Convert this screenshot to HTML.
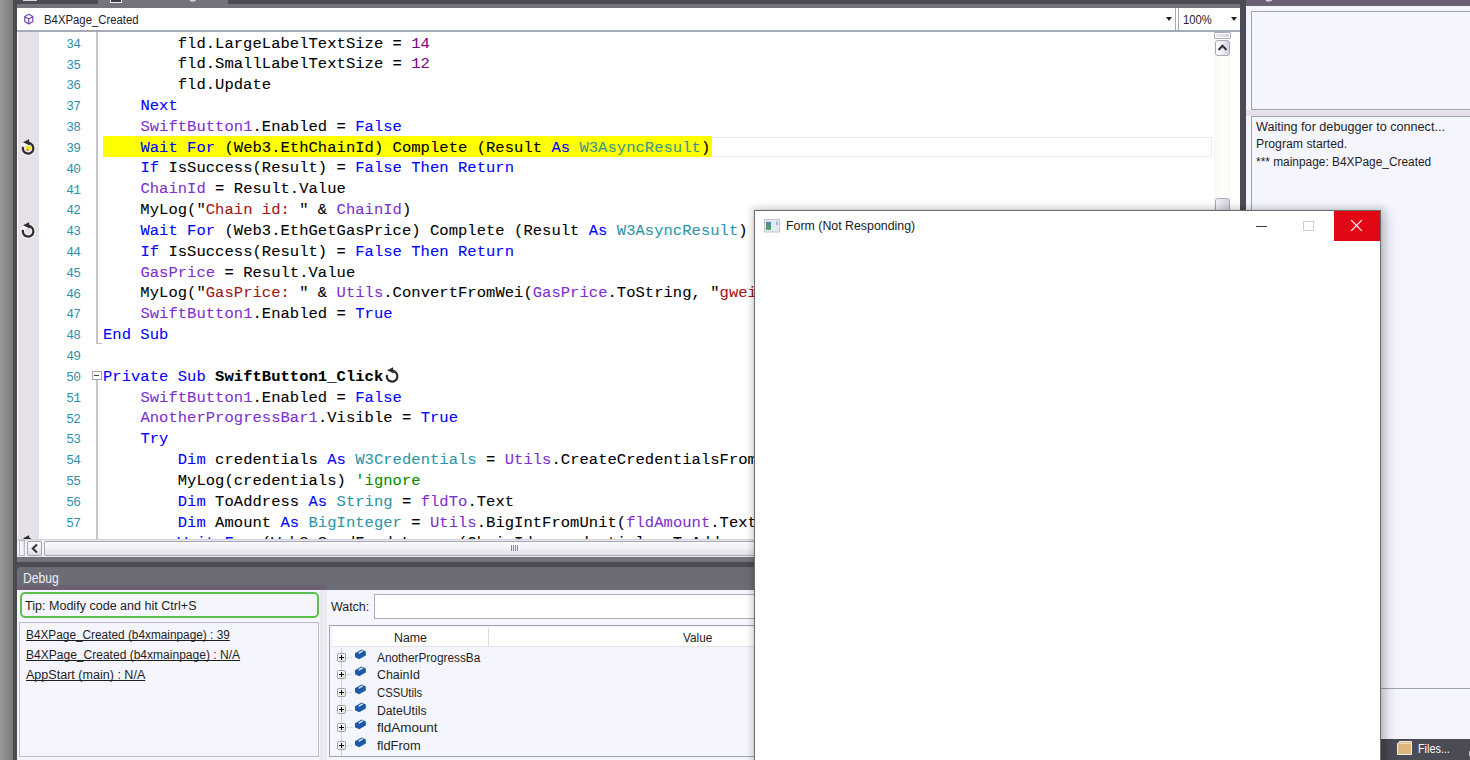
<!DOCTYPE html>
<html>
<head>
<meta charset="utf-8">
<title>B4X IDE</title>
<style>
*{box-sizing:border-box;margin:0;padding:0}
html,body{width:1470px;height:760px;overflow:hidden}
body{background:#4b4b55;font-family:"Liberation Sans",sans-serif;font-size:12px;color:#1a1a1a;position:relative}
.abs,body>div{position:absolute}
/* left outside gradient */
#lgrad{left:0;top:0;width:12.5px;height:760px;background:linear-gradient(to right,#999,#7a7a7a)}
/* top strip */
#tstrip{left:17px;top:4px;width:1223px;height:4.5px;background:#73737d}
#tabact{left:98px;top:0;width:130px;height:5px;background:#73737d}
/* editor */
#edbg{left:17px;top:8px;width:1223px;height:549px;background:#fff}
#gutter{left:17.5px;top:32px;width:21.5px;height:507px;background:#e6e0e9}
#oline{left:96px;top:32px;width:2px;height:311px;background:#c6c6c6}
#otick{left:96px;top:342.5px;width:5.5px;height:1.5px;background:#c0c0c0}
#oline2{left:96px;top:380px;width:2px;height:160px;background:#c6c6c6}
.cl{position:absolute;left:103px;white-space:pre;font-family:"Liberation Mono",monospace;font-size:15.5px;line-height:20.83px;height:20.83px;letter-spacing:0.04px;color:#000;-webkit-text-stroke:0.08px}
.ln{position:absolute;left:39.4px;width:41px;text-align:right;font-family:"Liberation Mono",monospace;font-size:12.8px;line-height:20.83px;height:20.83px;color:#2b91af;letter-spacing:-0.6px}
.k{color:#0000ff}.g{color:#7d30d0}.n{color:#800080}.t{color:#2d95a8}.s{color:#a31515}.c{color:#008c00}
.cl b{font-weight:bold}
#ddbar{left:17px;top:8.5px;width:1223px;height:21.5px;background:#fff}
#ddline{left:17px;top:30px;width:1223px;height:2px;background:#a4abb6}

/* dropdown bar */
#ddtxt{left:43px;top:10px;height:18px;line-height:18px;font-size:12.5px;color:#1e1e1e;white-space:nowrap}
.arrow{width:0;height:0;border-left:3.5px solid transparent;border-right:3.5px solid transparent;border-top:4px solid #222}
#ddsepL{left:1175px;top:8px;width:1px;height:22px;background:#a4abb6}
#ddsepR{left:1178px;top:8px;width:1px;height:22px;background:#a4abb6}
#zoomtxt{left:1182px;top:10px;height:18px;line-height:18px;font-size:12.5px;color:#1e1e1e;white-space:nowrap}
/* v scrollbar */
#vsb{left:1214px;top:32px;width:17px;height:507px;background:linear-gradient(to right,#f8f8f1,#fefefc 50%,#f9f8f5)}
#vsplit{left:1213.5px;top:32px;width:17.5px;height:7px;background:#fff;border:1px solid #adadbf;border-radius:1px}
#vsplit i{position:absolute;left:1.5px;top:1px;width:12.5px;height:3px;background:linear-gradient(to right,#ececf4,#cfcfe2)}
#vup{left:1214.8px;top:39.5px;width:15px;height:16px;border:1px solid #a9a9bc;border-radius:3px;background:linear-gradient(to right,#fdfdff 15%,#d2d2e4)}
#vthumb{left:1214.8px;top:197.5px;width:15px;height:400px;border:1px solid #ababba;border-radius:3px;background:linear-gradient(to right,#f4f4fa,#d4d4e2)}
/* h scrollbar */
#hsb{left:17px;top:539px;width:1223px;height:18px;background:linear-gradient(to bottom,#c8c8d0 0,#f0f0f6 2px,#f6f6fb 60%,#e8e8f0)}
#hsplit{left:19px;top:540px;width:6px;height:16px;border:1px solid #b8b8c4;background:linear-gradient(to right,#fff,#e0e0ea)}
#hleft{left:26.5px;top:540.5px;width:15px;height:15px;border:1px solid #a0a0b0;border-radius:2px;background:linear-gradient(to bottom,#fdfdff,#dcdce8)}
#hthumb{left:43.5px;top:540.5px;width:942px;height:15px;border:1px solid #a8a8b8;border-radius:2px;background:linear-gradient(to bottom,#fbfbfe 0,#f2f2f8 45%,#dedeea 100%)}
#hgrip{left:510.5px;top:545px;width:8px;height:6px;background:repeating-linear-gradient(to right,#8c8c98 0,#8c8c98 1px,transparent 1px,transparent 2px)}
/* bands under editor */
#band1{left:17px;top:557px;width:1223px;height:5px;background:#73737d}
/* debug */
#dbghead{left:17px;top:567px;width:1223px;height:23px;background:#6c6c76;border-top-left-radius:4px}
#dbgband{left:17px;top:585px;width:309px;height:5px;background:#6a6273}
#dbgtitle{left:23px;top:569px;height:17px;line-height:17px;font-size:12.5px;color:#ededf3;white-space:nowrap}
#dbgbody{left:17px;top:589.5px;width:1223px;height:171px;background:#f5f5fd}

/* debug contents */
#tipbox{left:19.5px;top:591.5px;width:299px;height:26px;border:2.9px solid #5cc148;border-radius:5px;background:#f5f5fd}
#tiptxt{left:25px;top:596px;height:17px;line-height:17px;font-size:12.5px;white-space:nowrap;color:#1e1e1e}
#stackbox{left:19px;top:622px;width:300px;height:135px;border:1px solid #b9bdca;background:#f5f5fd}
.stk{position:absolute;left:25px;height:17px;line-height:17px;font-size:12.5px;white-space:nowrap;color:#1e1e1e;text-decoration:underline}
#dsplit{left:319.5px;top:589.5px;width:7.5px;height:171px;background:#ebe8f0}
#watchlbl{left:331px;top:598px;height:17px;line-height:17px;font-size:12.5px;white-space:nowrap;color:#1e1e1e}
#watchin{left:373.5px;top:594px;width:700px;height:25px;border:1px solid #abadb3;background:#fff}
#tbl{left:328.8px;top:625px;width:760px;height:132px;border:1px solid #9ea4b0;background:#f5f5fd}
#thead{left:333px;top:627px;width:750px;height:20px;background:#fff;border-bottom:1px solid #e4e4ec}
#tcolsep{left:487.5px;top:627px;width:1px;height:20px;background:#dcdce4}
.th{position:absolute;top:629px;height:17px;line-height:17px;font-size:12.5px;white-space:nowrap;color:#1e1e1e}
.tr{position:absolute;left:377px;height:17px;line-height:17px;font-size:12.5px;white-space:nowrap;color:#1e1e1e}
.pm{position:absolute;left:337px;width:9px;height:9px;border:1px solid #8fa3bf;border-radius:1.5px;background:linear-gradient(135deg,#fff,#e6e0d0)}
.pm:before{content:"";position:absolute;left:1px;top:3px;width:5px;height:1px;background:#000}
.pm:after{content:"";position:absolute;left:3px;top:1px;width:1px;height:5px;background:#000}
#tvline{left:341px;top:648px;width:1px;height:108px;background:#d0d0d8}
.hcon{position:absolute;left:346px;width:6px;height:1px;background:#dcdce2}

/* right panel */
#rp{left:1246px;top:0;width:224px;height:760px;background:#f5f5fd}
#rphead{left:1246px;top:0;width:224px;height:5.5px;background:#6a6273}
#rpbox1{left:1251px;top:11px;width:230px;height:99px;border:1px solid #9ea4b0;background:#f5f5fd}
#rpsplit{left:1246px;top:110px;width:224px;height:5.5px;background:#e6e0e9}
#rpbox2{left:1251px;top:115.5px;width:230px;height:573.5px;border:1px solid #9ea4b0;background:#f5f5fd}
.log{position:absolute;left:1256.5px;height:17px;line-height:17px;font-size:12.5px;white-space:nowrap;color:#1e1e1e}
#rptabs{left:1246px;top:739px;width:224px;height:21px;background:#4b4b55}
#filestxt{left:1418px;top:740px;height:18px;line-height:18px;font-size:12.5px;color:#fff;white-space:nowrap}
/* form window */
#form{left:754px;top:210px;width:627px;height:560px;background:#fff;border:1px solid #6c6c6c;box-shadow:0 0 5px 4px rgba(0,0,0,.085),5px 3px 12px 1px rgba(0,0,0,.17),0 0 2px rgba(0,0,0,.1)}
#ftitle{left:786px;top:217px;height:18px;line-height:18px;font-size:13px;white-space:nowrap;color:#1a1a1a}
#fclose{left:1333.5px;top:211px;width:46.5px;height:29.5px;background:#e30615}
#fmin{left:1256px;top:225.5px;width:10.5px;height:1.2px;background:#3c3c3c}
#fmax{left:1303px;top:220.5px;width:10.5px;height:10.5px;border:1px solid #cfcfcf}

#cbox{left:92px;top:370.5px;width:9.5px;height:9.5px;border:1px solid #a8a8a8;background:#fff}
#cbox:before{content:"";position:absolute;left:1.2px;top:3.2px;width:5.2px;height:1.2px;background:#444}
.tx{text-decoration-skip-ink:none;position:absolute;white-space:nowrap;height:16px;line-height:16px;transform-origin:0 50%}
</style>
</head>
<body>
<div id="lgrad"></div>
<div id="tstrip"></div>
<div id="tabact"></div>


<div style="left:23px;top:0;width:14px;height:1.2px;background:#d6d6de"></div>
<div style="left:110px;top:0;width:12px;height:3px;border:1px solid #f0f0f4;border-top:none;background:#3a3a42"></div>
<svg class="abs" style="left:189px;top:0" width="8" height="3" viewBox="0 0 8 3"><path d="M1 0.2 Q3.5 1.8 6.2 0.3 L6.5 -1" fill="none" stroke="#e4e4ea" stroke-width="1.3"/></svg>
<!-- editor -->
<div id="edbg"></div>
<div id="gutter"></div>
<div id="hl" style="left:103px;top:136px;width:609px;height:20.8px;background:#ffff00"></div>
<div id="curbox" style="left:712px;top:137px;width:499.5px;height:19.5px;border:1px solid #ebebeb;border-left:none"></div>
<div id="oline"></div><div id="otick"></div><div id="oline2"></div>
<div class="ln" style="top:34.70px">34</div>
<div class="ln" style="top:55.53px">35</div>
<div class="ln" style="top:76.36px">36</div>
<div class="ln" style="top:97.19px">37</div>
<div class="ln" style="top:118.02px">38</div>
<div class="ln" style="top:138.85px">39</div>
<div class="ln" style="top:159.68px">40</div>
<div class="ln" style="top:180.51px">41</div>
<div class="ln" style="top:201.34px">42</div>
<div class="ln" style="top:222.17px">43</div>
<div class="ln" style="top:243.00px">44</div>
<div class="ln" style="top:263.83px">45</div>
<div class="ln" style="top:284.66px">46</div>
<div class="ln" style="top:305.49px">47</div>
<div class="ln" style="top:326.32px">48</div>
<div class="ln" style="top:347.15px">49</div>
<div class="ln" style="top:367.98px">50</div>
<div class="ln" style="top:388.81px">51</div>
<div class="ln" style="top:409.64px">52</div>
<div class="ln" style="top:430.47px">53</div>
<div class="ln" style="top:451.30px">54</div>
<div class="ln" style="top:472.13px">55</div>
<div class="ln" style="top:492.96px">56</div>
<div class="ln" style="top:513.79px">57</div>
<div class="ln" style="top:534.62px">58</div>
<div class="cl" style="top:33.50px">        fld.LargeLabelTextSize = <span class="n">14</span></div>
<div class="cl" style="top:54.33px">        fld.SmallLabelTextSize = <span class="n">12</span></div>
<div class="cl" style="top:75.16px">        fld.Update</div>
<div class="cl" style="top:95.99px">    <span class="k">Next</span></div>
<div class="cl" style="top:116.82px">    <span class="g">SwiftButton1</span>.Enabled = <span class="k">False</span></div>
<div class="cl" style="top:137.65px">    <span class="k">Wait For</span> (Web3.EthChainId) Complete (Result <span class="k">As</span> <span style="color:#3a9a86">W3AsyncResult</span>)</div>
<div class="cl" style="top:158.48px">    <span class="k">If</span> IsSuccess(Result) = <span class="k">False Then Return</span></div>
<div class="cl" style="top:179.31px">    <span class="g">ChainId</span> = Result.Value</div>
<div class="cl" style="top:200.14px">    MyLog("<span class="s">Chain id: </span>" &amp; <span class="g">ChainId</span>)</div>
<div class="cl" style="top:220.97px">    <span class="k">Wait For</span> (Web3.EthGetGasPrice) Complete (Result <span class="k">As</span> <span class="t">W3AsyncResult</span>)</div>
<div class="cl" style="top:241.80px">    <span class="k">If</span> IsSuccess(Result) = <span class="k">False Then Return</span></div>
<div class="cl" style="top:262.63px">    <span class="g">GasPrice</span> = Result.Value</div>
<div class="cl" style="top:283.46px">    MyLog("<span class="s">GasPrice: </span>" &amp; <span class="g">Utils</span>.ConvertFromWei(<span class="g">GasPrice</span>.ToString, "<span class="s">gwei</span>") &amp; " gwei")</div>
<div class="cl" style="top:304.29px">    <span class="g">SwiftButton1</span>.Enabled = <span class="k">True</span></div>
<div class="cl" style="top:325.12px"><span class="k">End Sub</span></div>
<div class="cl" style="top:345.95px"></div>
<div class="cl" style="top:366.78px"><span class="k">Private Sub</span> <b>SwiftButton1_Click</b></div>
<div class="cl" style="top:387.61px">    <span class="g">SwiftButton1</span>.Enabled = <span class="k">False</span></div>
<div class="cl" style="top:408.44px">    <span class="g">AnotherProgressBar1</span>.Visible = <span class="k">True</span></div>
<div class="cl" style="top:429.27px">    <span class="k">Try</span></div>
<div class="cl" style="top:450.10px">        <span class="k">Dim</span> credentials <span class="k">As</span> <span class="t">W3Credentials</span> = <span class="g">Utils</span>.CreateCredentialsFromPrivateKey(PrivateKey)</div>
<div class="cl" style="top:470.93px">        MyLog(credentials) <span class="c">'ignore</span></div>
<div class="cl" style="top:491.76px">        <span class="k">Dim</span> ToAddress <span class="k">As</span> <span class="t">String</span> = <span class="g">fldTo</span>.Text</div>
<div class="cl" style="top:512.59px">        <span class="k">Dim</span> Amount <span class="k">As</span> <span class="t">BigInteger</span> = <span class="g">Utils</span>.BigIntFromUnit(<span class="g">fldAmount</span>.Text, "ether")</div>
<div class="cl" style="top:533.42px">        <span class="k">Wait For</span> (Web3.SendFundsLegacy(ChainId, credentials, ToAddress, Amount)) Complete</div>
<svg class="abs" style="left:19.3px;top:138.7px" width="18" height="18" viewBox="-9 -9 18 18"><circle cx="0" cy="0.3" r="5.4" fill="none" stroke="#f6f3f8" stroke-width="4.4"/><path d="M-3.3 -1.6 L3.3 -1.6 L2.4 1.6 L0.6 2.2 L-1.6 1.8 Z" fill="#f5e400"/><rect x="-1.3" y="1.3" width="1.8" height="1.5" fill="#e8484a"/><path d="M0.2 -5.0 A5.3 5.3 0 1 1 -5.0 -1.2" fill="none" stroke="#2e2e2e" stroke-width="2.3"/><path d="M-5.0 -5.7 L1.0 -8.8 L1.8 -2.6 Z" fill="#2e2e2e"/></svg><svg class="abs" style="left:19.3px;top:222.0px" width="18" height="18" viewBox="-9 -9 18 18"><circle cx="0" cy="0.3" r="5.4" fill="none" stroke="#f6f3f8" stroke-width="4.4"/><path d="M0.2 -5.0 A5.3 5.3 0 1 1 -5.0 -1.2" fill="none" stroke="#2e2e2e" stroke-width="2.3"/><path d="M-5.0 -5.7 L1.0 -8.8 L1.8 -2.6 Z" fill="#2e2e2e"/></svg><svg class="abs" style="left:19.3px;top:535.0px" width="18" height="18" viewBox="-9 -9 18 18"><circle cx="0" cy="0.3" r="5.4" fill="none" stroke="#f6f3f8" stroke-width="4.4"/><path d="M0.2 -5.0 A5.3 5.3 0 1 1 -5.0 -1.2" fill="none" stroke="#2e2e2e" stroke-width="2.3"/><path d="M-5.0 -5.7 L1.0 -8.8 L1.8 -2.6 Z" fill="#2e2e2e"/></svg><svg class="abs" style="left:383.3px;top:366.6px" width="18" height="18" viewBox="-9 -9 18 18"><path d="M0.2 -5.0 A5.3 5.3 0 1 1 -5.0 -1.2" fill="none" stroke="#2e2e2e" stroke-width="2.3"/><path d="M-5.0 -5.7 L1.0 -8.8 L1.8 -2.6 Z" fill="#2e2e2e"/></svg><div id="cbox"></div>
<div id="ddbar"></div>
<div id="ddline"></div>

<svg class="abs" style="left:22.9px;top:13.4px" width="11.6" height="12.6" viewBox="0 0 12 13"><path d="M6 1.3 L10.2 3.7 L10.2 8.9 L6 11.4 L1.8 8.9 L1.8 3.7 Z M2 3.9 L6 6.3 L10 3.9 M6 6.3 L6 11.2" fill="none" stroke="#7248ad" stroke-width="1.2" stroke-linejoin="round"/></svg>
<div class="arrow" style="left:1165.5px;top:17px"></div>
<div id="ddsepL"></div><div id="ddsepR"></div>
<div class="arrow" style="left:1230.5px;top:17px"></div>
<!-- scrollbars -->
<div id="vsb"></div>
<div id="vsplit"><i></i></div>
<div id="vup"></div>
<svg class="abs" style="left:1217px;top:43px" width="11" height="9" viewBox="0 0 11 9"><path d="M1.5 7 L5.5 2.8 L9.5 7" fill="none" stroke="#333" stroke-width="2"/></svg>
<div id="vthumb"></div>
<div id="hsb"></div>
<div id="hsplit"></div>
<div id="hleft"></div>
<svg class="abs" style="left:29.5px;top:543px" width="9" height="11" viewBox="0 0 9 11"><path d="M7 1.5 L2.8 5.5 L7 9.5" fill="none" stroke="#333" stroke-width="2"/></svg>
<div id="hthumb"></div>
<div id="hgrip"></div>
<div id="band1"></div>
<div id="dbghead"></div><div id="dbgband"></div>
<div id="dbgbody"></div>

<div id="dsplit"></div>
<div id="tipbox"></div>
<div id="stackbox"></div>
<div id="watchin"></div>
<div id="tbl"></div>
<div id="thead"></div><div id="tcolsep"></div>
<div id="tvline"></div>
<div class="hcon" style="top:656.7px"></div><div class="pm" style="top:652.5px"></div><svg class="abs" style="left:353.5px;top:648.7px" width="13" height="11" viewBox="0 0 13 11"><path d="M1 4.2 L7.6 0.6 L11.8 2.6 L11.8 6.6 L5.2 10.3 L1 8.2 Z" fill="#1d59a8"/><path d="M5.2 3.9 L8.3 2.2" stroke="#dfe8f6" stroke-width="1.5" stroke-linecap="round"/></svg><div class="hcon" style="top:674.3px"></div><div class="pm" style="top:670.1px"></div><svg class="abs" style="left:353.5px;top:666.3px" width="13" height="11" viewBox="0 0 13 11"><path d="M1 4.2 L7.6 0.6 L11.8 2.6 L11.8 6.6 L5.2 10.3 L1 8.2 Z" fill="#1d59a8"/><path d="M5.2 3.9 L8.3 2.2" stroke="#dfe8f6" stroke-width="1.5" stroke-linecap="round"/></svg><div class="hcon" style="top:692.0px"></div><div class="pm" style="top:687.8px"></div><svg class="abs" style="left:353.5px;top:684.0px" width="13" height="11" viewBox="0 0 13 11"><path d="M1 4.2 L7.6 0.6 L11.8 2.6 L11.8 6.6 L5.2 10.3 L1 8.2 Z" fill="#1d59a8"/><path d="M5.2 3.9 L8.3 2.2" stroke="#dfe8f6" stroke-width="1.5" stroke-linecap="round"/></svg><div class="hcon" style="top:709.6px"></div><div class="pm" style="top:705.4px"></div><svg class="abs" style="left:353.5px;top:701.6px" width="13" height="11" viewBox="0 0 13 11"><path d="M1 4.2 L7.6 0.6 L11.8 2.6 L11.8 6.6 L5.2 10.3 L1 8.2 Z" fill="#1d59a8"/><path d="M5.2 3.9 L8.3 2.2" stroke="#dfe8f6" stroke-width="1.5" stroke-linecap="round"/></svg><div class="hcon" style="top:727.2px"></div><div class="pm" style="top:723.0px"></div><svg class="abs" style="left:353.5px;top:719.2px" width="13" height="11" viewBox="0 0 13 11"><path d="M1 4.2 L7.6 0.6 L11.8 2.6 L11.8 6.6 L5.2 10.3 L1 8.2 Z" fill="#1d59a8"/><path d="M5.2 3.9 L8.3 2.2" stroke="#dfe8f6" stroke-width="1.5" stroke-linecap="round"/></svg><div class="hcon" style="top:744.9px"></div><div class="pm" style="top:740.6px"></div><svg class="abs" style="left:353.5px;top:736.9px" width="13" height="11" viewBox="0 0 13 11"><path d="M1 4.2 L7.6 0.6 L11.8 2.6 L11.8 6.6 L5.2 10.3 L1 8.2 Z" fill="#1d59a8"/><path d="M5.2 3.9 L8.3 2.2" stroke="#dfe8f6" stroke-width="1.5" stroke-linecap="round"/></svg>

<div id="rp"></div><div id="rphead"></div>
<svg class="abs" style="left:1265px;top:0" width="8" height="3" viewBox="0 0 8 3"><path d="M1 0.2 Q3.5 1.8 6.2 0.3 L6.5 -1" fill="none" stroke="#e4e0ea" stroke-width="1.3"/></svg>
<div id="rpbox1"></div><div id="rpsplit"></div><div id="rpbox2"></div>
<div id="rptabs"></div>
<svg class="abs" style="left:1396px;top:740px" width="17" height="16" viewBox="0 0 17 16"><path d="M1.5 14.5 L1.5 3.5 L4 1.5 L15.5 1.5 L15.5 14.5 Z" fill="#dcb67a" stroke="#f3efe6" stroke-width="1"/><path d="M4 1.8 L4 3.6 L15.3 3.6" fill="none" stroke="#f3efe6" stroke-width="0.8"/></svg>
<div class="tx" style="left:43.5px;top:11.5px;font-size:13.7px;color:#1e1e1e;transform:scaleX(0.829);">B4XPage_Created</div>
<div class="tx" style="left:1182.6px;top:11.5px;font-size:13.7px;color:#1e1e1e;transform:scaleX(0.822);">100%</div>
<div class="tx" style="left:22.7px;top:570.3px;font-size:14.4px;color:#ececf2;transform:scaleX(0.844);">Debug</div>
<div class="tx" style="left:24.7px;top:597.5px;font-size:13.7px;color:#1e1e1e;transform:scaleX(0.917);">Tip: Modify code and hit Ctrl+S</div>
<div class="tx" style="left:25.7px;top:626.8px;font-size:13.7px;color:#1e1e1e;transform:scaleX(0.864);text-decoration:underline">B4XPage_Created (b4xmainpage) : 39</div>
<div class="tx" style="left:25.7px;top:646.7px;font-size:13.7px;color:#1e1e1e;transform:scaleX(0.879);text-decoration:underline">B4XPage_Created (b4xmainpage) : N/A</div>
<div class="tx" style="left:25.7px;top:666.6px;font-size:13.7px;color:#1e1e1e;transform:scaleX(0.917);text-decoration:underline">AppStart (main) : N/A</div>
<div class="tx" style="left:330.8px;top:598.6px;font-size:13.7px;color:#1e1e1e;transform:scaleX(0.907);">Watch:</div>
<div class="tx" style="left:393.5px;top:629.8px;font-size:13.7px;color:#1e1e1e;transform:scaleX(0.904);">Name</div>
<div class="tx" style="left:682.5px;top:629.8px;font-size:13.7px;color:#1e1e1e;transform:scaleX(0.862);">Value</div>
<div class="tx" style="left:377.0px;top:649.7px;font-size:13.7px;color:#1e1e1e;transform:scaleX(0.865);">AnotherProgressBa</div>
<div class="tx" style="left:377.0px;top:667.3px;font-size:13.7px;color:#1e1e1e;transform:scaleX(0.907);">ChainId</div>
<div class="tx" style="left:377.0px;top:685.0px;font-size:13.7px;color:#1e1e1e;transform:scaleX(0.825);">CSSUtils</div>
<div class="tx" style="left:377.0px;top:702.6px;font-size:13.7px;color:#1e1e1e;transform:scaleX(0.891);">DateUtils</div>
<div class="tx" style="left:377.0px;top:720.2px;font-size:13.7px;color:#1e1e1e;transform:scaleX(0.983);">fldAmount</div>
<div class="tx" style="left:377.0px;top:737.9px;font-size:13.7px;color:#1e1e1e;transform:scaleX(0.940);">fldFrom</div>
<div class="tx" style="left:1256.3px;top:118.5px;font-size:13.7px;color:#1e1e1e;transform:scaleX(0.922);">Waiting for debugger to connect...</div>
<div class="tx" style="left:1256.3px;top:136.1px;font-size:13.7px;color:#1e1e1e;transform:scaleX(0.895);">Program started.</div>
<div class="tx" style="left:1256.3px;top:153.7px;font-size:13.7px;color:#1e1e1e;transform:scaleX(0.869);">*** mainpage: B4XPage_Created</div>
<div class="tx" style="left:1418.0px;top:741.3px;font-size:13.7px;color:#ffffff;transform:scaleX(0.789);">Files...</div>
<div style="left:1468.5px;top:751px;width:2px;height:5px;background:#b8b8c0"></div>
<!-- form window -->
<div id="form"></div>
<div id="fclose"></div>
<svg class="abs" style="left:1350px;top:219px" width="13" height="13" viewBox="0 0 13 13"><path d="M1.2 1.2 L11.8 11.8 M11.8 1.2 L1.2 11.8" stroke="#fff" stroke-width="1.2" fill="none"/></svg>
<div id="fmin"></div><div id="fmax"></div>
<svg class="abs" style="left:764px;top:218.5px" width="16" height="14" viewBox="0 0 16 14"><rect x="0.5" y="0.5" width="15" height="12.5" fill="#e9e9f0" stroke="#c3c3d2"/><defs><linearGradient id="fg" x1="0" y1="0" x2="0" y2="1"><stop offset="0" stop-color="#4f86b8"/><stop offset="1" stop-color="#4aa356"/></linearGradient></defs><rect x="2" y="2.8" width="5" height="8" fill="url(#fg)"/><rect x="12" y="2.5" width="2" height="3.5" fill="#9cc0e4"/></svg>
<div class="tx" style="left:785.6px;top:218.4px;font-size:13.7px;color:#1a1a1a;transform:scaleX(0.903);">Form (Not Responding)</div>
<!--MORE-->
</body>
</html>
